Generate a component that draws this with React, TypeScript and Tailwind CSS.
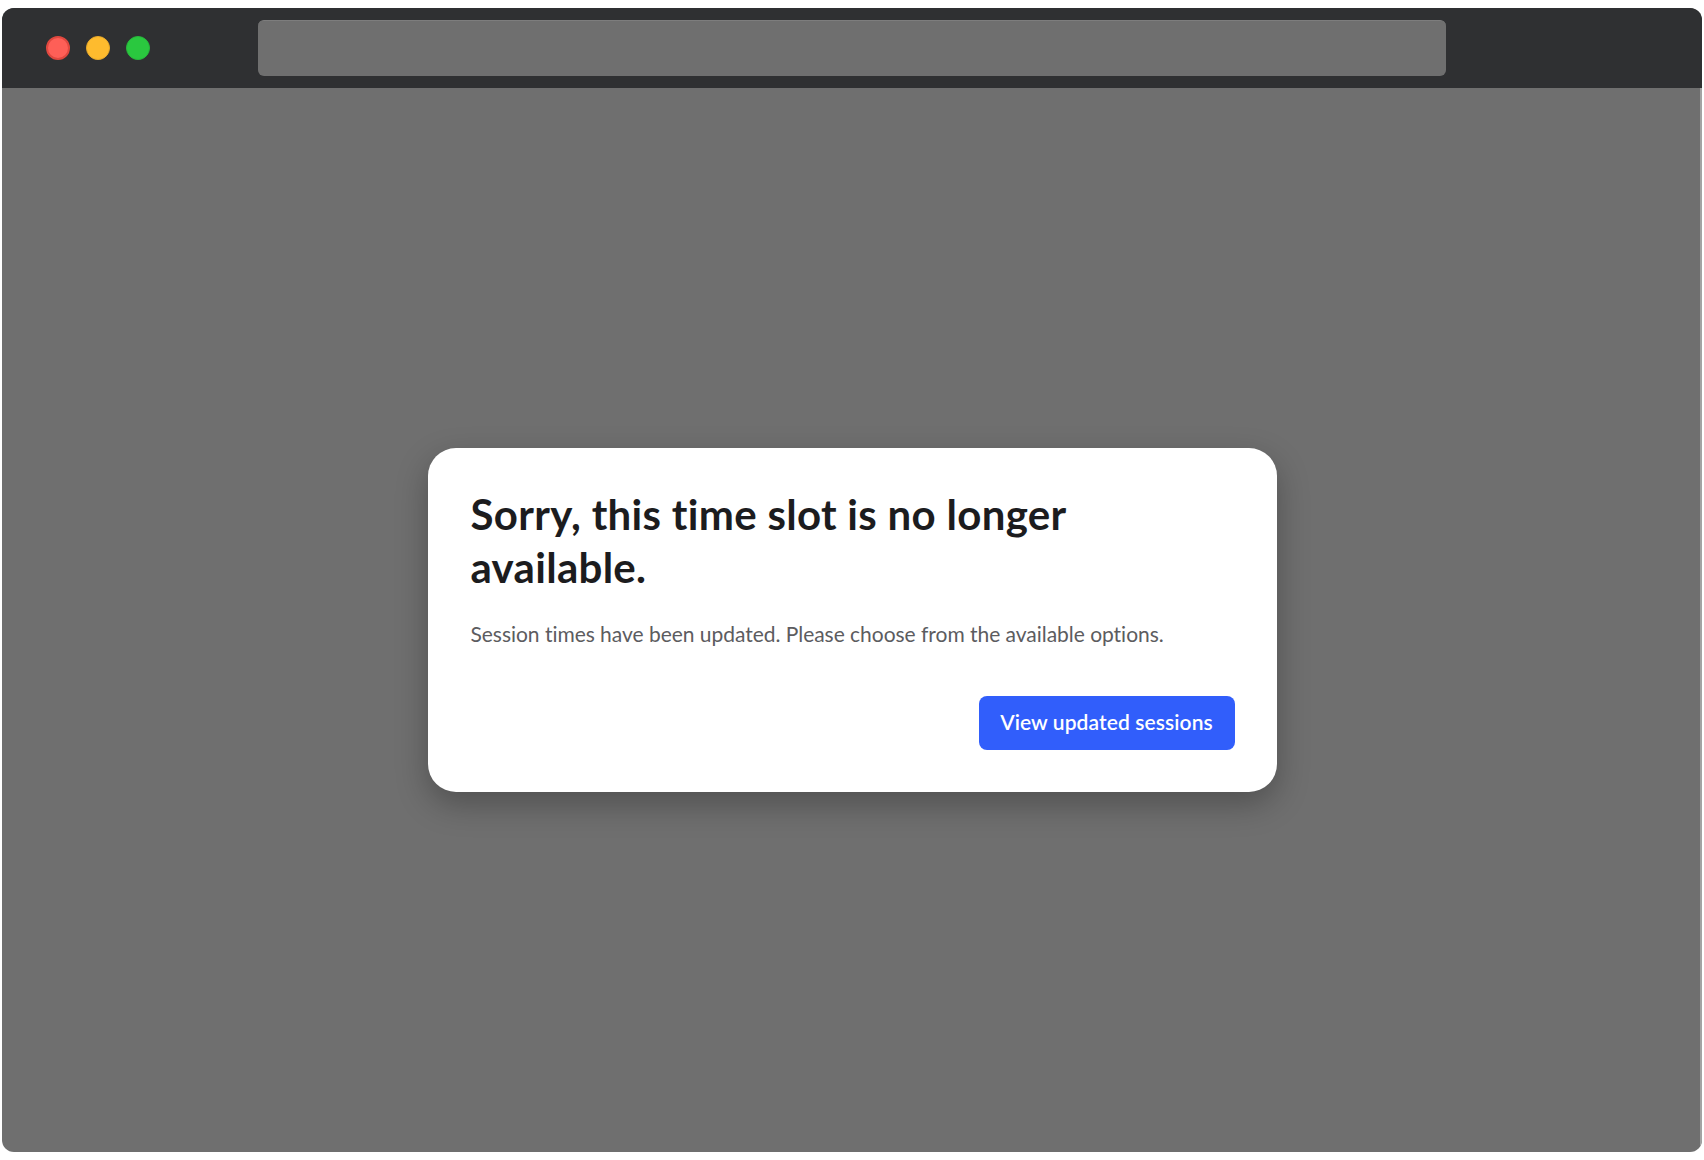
import React from "react";

const App = () => {
  return (
    <div className="w-[1704px] h-[1160px] bg-white pt-2 pl-[2px] pr-[2px] overflow-hidden font-['Lato',sans-serif] [font-variant-ligatures:none]">
      <div className="flex h-[1144px] w-[1700px] flex-col overflow-hidden rounded-[12px] bg-[#6f6f6f]">
        {/* Browser bar */}
        <div className="flex h-20 shrink-0 items-center bg-[#2f3032] pl-[44px]">
          <div className="flex gap-4">
            <span className="h-6 w-6 rounded-full border-2 border-[#e0483f] bg-[#fe5f57]" />
            <span className="h-6 w-6 rounded-full border border-[#e8a92a] bg-[#febb2e]" />
            <span className="h-6 w-6 rounded-full border border-[#27b73b] bg-[#2ac83f]" />
          </div>
          <div className="ml-[108px] h-14 w-[1188px] rounded-md border-t border-[#7d7d7d] bg-[#6f6f6f]" />
        </div>

        {/* Page */}
        <div className="flex flex-1 items-center justify-center border-r-2 border-[#a3a3a3] pl-[2px]">
          <div className="flex h-[344px] w-[849px] flex-col rounded-[28px] bg-white pl-[43px] pr-[42px] pt-[40px] shadow-[0_12px_32px_rgba(0,0,0,0.28)]">
            <h1 className="text-[42px] font-bold leading-[53px] tracking-[0.3px] text-[#1c1c1e]">
              Sorry, this time slot is no longer available.
            </h1>
            <p className="mt-[26px] text-[21px] leading-[28px] tracking-[-0.03px] text-[#5c5c5f]">
              Session times have been updated. Please choose from the available options.
            </p>
            <div className="mt-[48px] flex justify-end">
              <button className="h-[54px] w-[256px] rounded-lg bg-[#315efb] pb-[2px] text-[21px] font-semibold tracking-[0.1px] text-white">
                View updated sessions
              </button>
            </div>
          </div>
        </div>
      </div>
    </div>
  );
};

export default App;
